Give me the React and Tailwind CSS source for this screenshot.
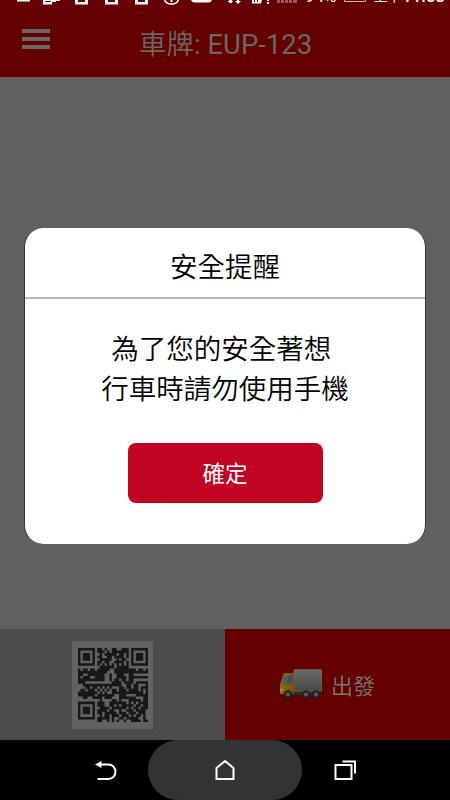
import React, { useState } from 'react';

const FONT = "font-['Roboto','Noto_Sans_CJK_TC',sans-serif]";

const QR_ROWS = [
  '11111110110100110011101111111',
  '10000010111010111111101000001',
  '10111010010111110110101011101',
  '10111010110011011110101011101',
  '10111010011111001011001011101',
  '10000010110110011110101000001',
  '11111110101010101010101111111',
  '00000000011111101111100000000',
  '10110110111110011111111101101',
  '11111111111100011111111111111',
  '11001111111001001110011000000',
  '10111001111001001111011111111',
  '11111111111001011011011000000',
  '11100000000000111101111011111',
  '00111111111111111100110110001',
  '00011011010101000110110110111',
  '01101110101010110111011110101',
  '11111111010100111111111111101',
  '11111110111111100111000011111',
  '00110011110111000111111100011',
  '00000000010000110100011111011',
  '11111110111001111111010101111',
  '10000010111001101011111011011',
  '10111010011110111111010110111',
  '10111010111101100100111011110',
  '10111010110111110111011101110',
  '10000010010110111011101011010',
  '11111110111110100110111110010',
  '00000000110010101001001111011',
];

const qrPath = QR_ROWS.map((row, y) =>
  row.split('').map((cell, x) => (cell === '1' ? `M${x} ${y}h1v1h-1z` : '')).join('')
).join('');

const QrCode = () => (
  <svg className="w-[70px] h-[74px]" viewBox="0 0 29 29" preserveAspectRatio="none">
    <path d={qrPath} fill="#171717" />
  </svg>
);

const Truck = () => (
  <svg className="w-[44px] h-[32px]" viewBox="0 0 44 32">
    <defs>
      <linearGradient id="box" x1="0" y1="0" x2="0" y2="1">
        <stop offset="0" stopColor="#696969" />
        <stop offset="1" stopColor="#464646" />
      </linearGradient>
      <linearGradient id="cab" x1="0" y1="0" x2="1" y2="0">
        <stop offset="0" stopColor="#8b6f0c" />
        <stop offset="1" stopColor="#805009" />
      </linearGradient>
    </defs>
    <rect x="14" y="22" width="28" height="4" fill="#302c2c" />
    <path d="M4.500 5q.5-1 1.500-1h8.500V25H1v-9.500z" fill="url(#cab)" />
    <path d="M5.500 6.500h7.500v7.500l-10.500 1.500z" fill="#45606c" />
    <path d="M10 6.500h3v7.500l-5.500.7z" fill="#355460" />
    <rect x="1" y="20" width="3" height="2" fill="#9a8b55" />
    <rect x="15" y="0.800" width="27.500" height="21.200" fill="url(#box)" stroke="#787878" strokeWidth="0.700" />
    {[9, 27, 37].map((cx) => (
      <g key={cx}>
        <circle cx={cx} cy="25.500" r="4.300" fill="#252020" />
        <circle cx={cx} cy="25.500" r="2" fill="#5f5b5b" />
      </g>
    ))}
  </svg>
);

// only the lower edge of the system icons is on screen
const StatusBar = () => (
  <div className="h-[6px] shrink-0 flex items-end overflow-hidden relative">
    <svg className="w-[300px] h-[6px] shrink-0" viewBox="0 0 300 6" fill="#fff">
      <rect x="17" y="0" width="13" height="1.500" />
      <path d="M43 0h9v4.500h-9zM52 0h8v1h-4v1h-4z" />
      <path d="M45 1.500h6" stroke="#650000" strokeWidth="1" />
      <path d="M75 0h3v2h7V0h3v4.500H75zM105 0h3v2h7V0h3v4.500h-13zM135 0h3v2h7V0h3v4.500h-13z" />
      <path d="M164.500 -1a7 5 0 0 0 14 0" fill="none" stroke="#fff" strokeWidth="1.500" />
      <rect x="170.500" y="0" width="2" height="2" />
      <path d="M191 0h21q-1 2.500-4 2.500h-13q-3 0-4-2.500z" />
      <path d="M229 0h3v3h-3zM228 1h5v1h-5zM237 0h2v1h2l-3 3-3-3h2z" />
      <path d="M252 0h10l-1 3.500h-9z" />
      <path d="M254.500 0v2M257.500 0v2" stroke="#650000" />
      <path d="M267 0h2v1h-2zM267 2h2v2h-2z" />
      <path d="M277 0h3v3h-3zM281 0h3v3h-3zM285 0h3v3h-3zM289 0h3v3h-3zM293 0h4v3h-4z" fill="#96595f" />
    </svg>
    <div className={`absolute left-[305px] top-[-14px] text-[17px] leading-[20px] text-white ${FONT}`}>94%</div>
    <svg className="absolute left-[344px] top-0 w-[22px] h-[3px]" viewBox="0 0 22 3">
      <path d="M.5 0v1.500h21V0" fill="none" stroke="#cfb6b6" />
    </svg>
    <div className="absolute left-[374px] top-[-15px] text-[13.500px] leading-[20px] text-[#eee] whitespace-nowrap font-['Noto_Sans_CJK_TC',sans-serif]">上午</div>
    <div className={`absolute left-[402px] top-[-14px] text-[17px] leading-[20px] font-medium text-white ${FONT}`}>11:53</div>
  </div>
);

const Header = () => (
  <header className="h-[77px] shrink-0 bg-[#650000] flex flex-col">
    <StatusBar />
    <div className="flex flex-1 items-start">
      <button className="ml-[22px] mt-[23px] w-[28px] flex flex-col gap-[4px]">
        <span className="h-[4px] w-full bg-[#6b6767]"></span>
        <span className="h-[4px] w-full bg-[#6b6767]"></span>
        <span className="h-[4px] w-full bg-[#6b6767]"></span>
      </button>
      <h1 className={`ml-[89px] mt-[19px] text-[27.500px] leading-[40px] text-[#6b6767] whitespace-nowrap ${FONT}`}>
        <span className="font-[350]">車牌</span>: EUP-123
      </h1>
    </div>
  </header>
);

const SafetyDialog = ({ onConfirm }) => (
  <div className="w-[402px] h-[316px] rounded-[19px] border-x border-[#333] bg-white flex flex-col items-center text-black">
    <h2 className="w-full h-[71px] border-b-2 border-[#b8b8b8] text-center text-[27.500px] leading-[80px] font-[350]">
      安全提醒
    </h2>
    <p className="mt-[31px] text-[27.500px] leading-[40px] font-[350] whitespace-nowrap">
      <span className="block pl-[10px]">為了您的安全著想</span>
      <span className="block">行車時請勿使用手機</span>
    </p>
    <button
      className="mt-[33px] w-[195px] h-[60px] rounded-[8px] bg-[#c10324] text-[22.500px] leading-[62px] text-white"
      onClick={onConfirm}
    >
      確定
    </button>
  </div>
);

const NavBar = () => (
  <nav className="h-[60px] shrink-0 bg-black flex">
    <button className="w-[148px] flex items-center">
      <svg className="ml-[94px] w-[24px] h-[24px]" viewBox="0 0 24 24" fill="none" stroke="#fff" strokeWidth="2">
        <path d="M4 6.500h10.500a7 7.250 0 0 1 0 14.500H3.500" />
        <path d="M1 6.500L7.500 3v7z" fill="#fff" stroke="none" />
      </svg>
    </button>
    <button className="w-[154px] rounded-[30px] bg-[#333] flex items-center justify-center">
      <svg className="w-[24px] h-[24px]" viewBox="0 0 24 24" fill="none" stroke="#fff" strokeWidth="2">
        <path d="M3.500 21V10L12 3l8.500 7v11z" />
      </svg>
    </button>
    <button className="w-[148px] flex items-center">
      <svg className="ml-[31px] w-[24px] h-[24px]" viewBox="0 0 24 24" fill="none" stroke="#fff" strokeWidth="2">
        <rect x="2.500" y="7" width="16" height="14" />
        <path d="M9.500 3.500h12.500v12" />
      </svg>
    </button>
  </nav>
);

const App = () => {
  const [open, setOpen] = useState(true);

  return (
    <div className={`w-[450px] h-[800px] overflow-hidden flex flex-col bg-[#61605e] ${FONT}`}>
      <Header />
      <main className="h-[552px] shrink-0 flex justify-center pt-[151px]">
        {open && <SafetyDialog onConfirm={() => setOpen(false)} />}
      </main>
      <div className="h-[111px] shrink-0 flex">
        <button className="w-[225px] bg-[#4c4c4c] flex justify-center pt-[12px]">
          <div className="w-[81px] h-[88px] bg-[#626262] flex items-center justify-center">
            <QrCode />
          </div>
        </button>
        <button className="w-[225px] bg-[#650000] flex items-center pl-[54px] gap-[8px]">
          <Truck />
          <span className="text-[22px] leading-[30px] font-[350] text-[#777] mt-[4px]">出發</span>
        </button>
      </div>
      <NavBar />
    </div>
  );
};

export default App;
